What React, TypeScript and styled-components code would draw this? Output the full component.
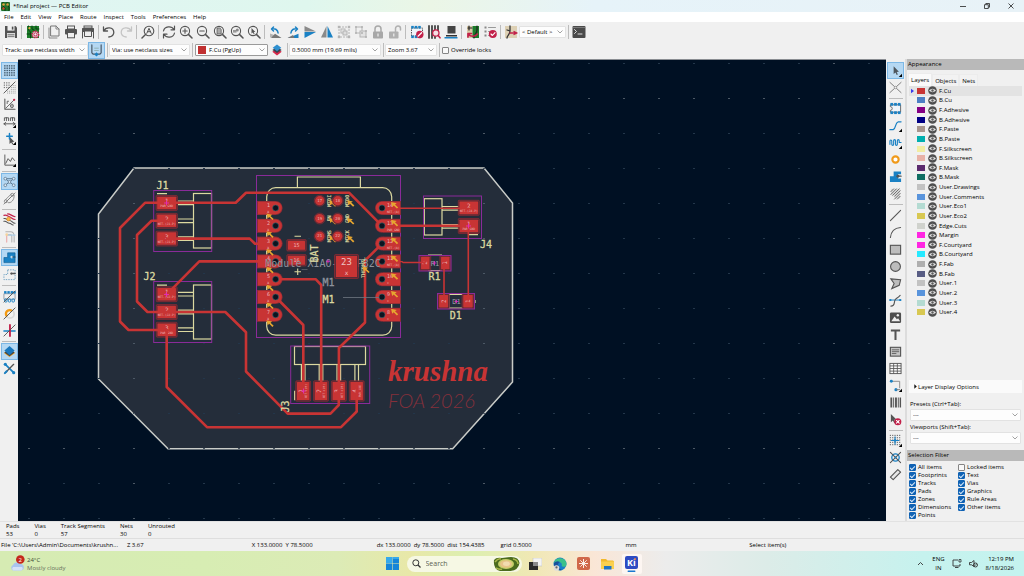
import React, { useState } from "react";
import styled, { createGlobalStyle, css } from "styled-components";

const GlobalStyle = createGlobalStyle`
  * { box-sizing: border-box; }
  html, body, #root { height: 100%; }
  body { margin: 0; font-family: "Open Sans", "Noto Sans", sans-serif; font-size: 6px; line-height: 8px; color: #000; font-variant-ligatures: none; overflow: hidden; }
  button, select, input { font: inherit; color: inherit; margin: 0; padding: 0; }
  svg { display: block; }
`;

/* ---------- icon set ---------- */

const G = "#545454";
const B = "#1a81c4";
const R = "#c2214a";
const L = "#b4b4b4";

const line = (d: string, stroke = G, w = 1.2, fill = "none") => (
  <path d={d} stroke={stroke} strokeWidth={w} fill={fill} strokeLinecap="round" strokeLinejoin="round" />
);
const lens = (inner: React.ReactNode) => (
  <>
    <circle cx="6" cy="6" r="4.6" fill="none" stroke={G} strokeWidth="1.1" />
    {line("M9.4 9.4 13 13", G, 1.5)}
    {inner}
  </>
);
const dots = (xs: number[], ys: number[], color = G, r = 0.65) =>
  xs.flatMap((x) => ys.map((y) => <rect key={`${x}-${y}`} x={x - r} y={y - r} width={r * 2} height={r * 2} fill={color} />));
const slash = line("M1 13 13 1", G, 1);
const corner = <path d="M14 10.5V14h-3.5z" fill="#000" />;

const icons: Record<string, React.ReactNode> = {
  save: <><path d="M1 1h10.5L13 2.5V13H1z" fill={G} /><rect x="3.5" y="1" width="7" height="4.6" fill="#f0f0f0" /><rect x="7.8" y="1.6" width="1.6" height="3" fill={G} /><rect x="3" y="8" width="8" height="5" fill="#dcdcdc" />{line("M4 9.7h6M4 11.4h6", G, 0.7)}</>,
  board: <><rect x="1" y="1" width="12" height="12" fill="#1d7d2a" />{line("M2.5 1v4l2 2v6M6 1v3l2 1M1 9h3M10 1v3h3", "#0c4213", 1)}<circle cx="3.4" cy="3.2" r="1.1" fill="#e0b040" /><circle cx="9.4" cy="9.4" r="3.2" fill="#f0f0f0" stroke={R} strokeWidth="1.5" strokeDasharray="1.6 .8" /><circle cx="9.4" cy="9.4" r="1.6" fill="none" stroke={R} /></>,
  page: <>{line("M4 1h5l3 3v7H4z", "#777", 1)}{line("M9 1v3h3M2 3v10h8", "#888", 1)}</>,
  print: <><rect x="3.5" y="1" width="7" height="3" fill="none" stroke={G} /><rect x="1" y="4" width="12" height="5.6" rx="1" fill={G} /><rect x="3.5" y="7.5" width="7" height="5.3" fill="#eee" stroke={G} /></>,
  plot: <><rect x="1" y="3" width="12" height="4" rx=".5" fill={G} /><rect x="3" y="1" width="8" height="2" fill="none" stroke={G} /><path d="M3.5 6h7v5.5h-7z" fill="#eee" stroke={G} />{line("M1.5 7v6M12.500 7v6", G, 1)}</>,
  undo: line("M1.500 2v4h4M1.800 6C4 1.500 11.500 2 11.800 7.300c0 2.500-2 4.400-5 4.700", G, 1.3),
  redo: line("M12.500 2v4h-4M12.200 6C10 1.500 2.500 2 2.200 7.300c0 2.500 2 4.400 5 4.700", "#c4c4c4", 1.3),
  find: <><circle cx="8" cy="6" r="4.8" fill="none" stroke={G} strokeWidth="1.1" />{line("M4.500 9.500 1 13", G, 1.5)}{line("M5.800 8.300 8 3.300l2.200 5M6.600 6.700h2.800", G, 1)}</>,
  refresh: <>{line("M1.500 6C2.500 1 9.500 .500 12 4.500M12.500 1v3.800H9M12.500 8c-1 5-8 5.500-10.500 1.500M1.500 13V9.200H5", G, 1.2)}</>,
  zin: lens(line("M6 3.800v4.400M3.800 6h4.400", G, 1.1)),
  zout: lens(line("M3.800 6h4.400", G, 1.1)),
  zfit: lens(<path d="M4 3h2.800L8.200 4.300V9H4z" fill="#aaa" stroke={G} strokeWidth=".7" />),
  zobj: lens(<><rect x="3" y="5" width="3.500" height="2.600" fill="#999" /><circle cx="7.300" cy="5" r="1.500" fill="#888" /></>),
  zsel: lens(<path d="M4.500 3v5.500l1.300-1 1 1.700.8-.5-.9-1.600 1.600-.2z" fill={G} />),
  rotl: <><path d="M1 12.500V8.500l11 4z" fill={L} /><path d="M2 13h10.500L6 8.800z" fill="#777" />{line("M4.500 2 2.500 4l2 2M2.800 4c3.500-.6 6 .6 6.300 4", B, 1.5)}</>,
  rotr: <><path d="M2 13h10.500V8.800z" fill={B} /><path d="M1.500 13h7L7 10z" fill="#777" />{line("M9.500 2l2 2-2 2M11.200 4C7.700 3.400 5.200 4.600 4.900 8", B, 1.5)}</>,
  mirv: <><path d="M1.500 1v5.500H13z" fill="#8a8a8a" /><path d="M1.500 13V7H13z" fill={B} /></>,
  mirh: <><path d="M6.500 1v11.500H1z" fill="#8a8a8a" /><path d="M7.500 1v11.500H13z" fill={B} /></>,
  group: <><rect x="2" y="2" width="10" height="10" fill="none" stroke={L} strokeDasharray="2 1" />{dots([2, 12], [2, 12], L, 1.2)}<rect x="4" y="4" width="4" height="4" fill="none" stroke={L} /><rect x="6" y="6" width="4" height="4" fill="#ddd" stroke={L} /></>,
  ungroup: <><rect x="2" y="2" width="6" height="6" fill="none" stroke={L} /><rect x="6" y="6" width="6" height="6" fill="#e2e2e2" stroke={L} />{dots([2, 8], [2, 8], L, 0.9)}{dots([12], [6, 12], L, 0.9)}</>,
  lock: <>{line("M4 7V4a3 3 0 0 1 6 0v3", "#a8a8a8", 1.500)}<rect x="2" y="6.500" width="10" height="7" rx=".8" fill="#a8a8a8" /><rect x="6.400" y="8.500" width="1.200" height="3" fill="#eee" /></>,
  unlock: <>{line("M7.500 7V3.500a2.500 2.500 0 0 1 5 0V5", "#b0b0b0", 1.500)}<rect x="1" y="6.500" width="9.500" height="7" rx=".8" fill="#b0b0b0" /><rect x="5.200" y="8.500" width="1.200" height="3" fill="#eee" /></>,
  fpedit: <><rect x="1.500" y="3" width="11" height="8" fill="#eef4fa" stroke={G} strokeDasharray="1.500 1" />{dots([2.5, 6, 9.500], [2.2, 11.8], B, 1.3)}<circle cx="9.800" cy="9.500" r="3.700" fill={R} />{line("M8 11.200 11.600 7.700", "#fff", 1.200)}</>,
  fplib: <>{line("M2 1v12M5 1v12M8 1v12M11 1v5", G, 2)}<circle cx="8.800" cy="8" r="3.200" fill="#f6dfe5" stroke={R} strokeWidth="1.300" />{line("M11.200 10.400 13 12.800", R, 1.600)}</>,
  inspector: <><rect x="3.500" y="1" width="8" height="7.500" fill="#444" /><path d="M2 10h11v1.500H2z" fill="#333" /><path d="M.5 12h13v1.500H.5z" fill={B} /></>,
  update: <><rect x="1" y="1" width="5.500" height="12" fill="#d9c9a7" /><rect x="6.500" y="1" width="6.500" height="12" fill="#1d7d2a" />{line("M8 13C8 9 11 9 11 5V1M2 3h4M3 1v4", "#222", 1.200)}{line("M2.500 9c2 3 6 3 9 0M2 12V8.500h3.500", R, 1.700)}</>,
  drc: <>{dots([2.500], [2.500, 6.500, 10.500], "#888", 1)}{line("M5.500 2.500h7M5.500 6.500h3M5.500 10.500h1", "#999", 1)}<circle cx="9.800" cy="9" r="4" fill={R} />{line("M8 9l1.400 1.500L12 7.700", "#fff", 1.100)}</>,
  net: <><rect x="1" y="1" width="12" height="12" fill="#ddd0b4" />{line("M6 1v5M3 13c0-3 3-3 3-7M6 6l-3-1", "#333", 1.300)}{line("M6 8h7M10 6.500 13 8l-3 1.500", R, 1.300)}</>,
  console: <><rect x=".5" y="1" width="13" height="12" rx="1" fill="#4a4a4a" />{line("M2.500 4.500 4.500 6.500 2.500 8.500M6 9h4", "#eee", 0.900)}<path d="M1 2.500h12" stroke="#999" strokeWidth=".6" /></>,
  trackw: <>{line("M2 1v8.500L3.500 11h7l1.500-1.500V1", "#4b5968", 1.300)}{line("M5 4.500h4M5 7h4", "#8aa", 0.900)}<path d="M7 9 9.300 11.200 7 13.500 4.700 11.200z" fill={B} /></>,
  layers: <><path d="M7 5.500 12.500 9 7 13.500 1.500 9z" fill="#d8284b" /><path d="M7 3.500 12.500 7 7 10.500 1.500 7z" fill="#3c4450" /><path d="M7 .5 12 4.500 7 8.500 2 4.500z" fill="#2e90d0" /></>,
  grid: dots([2, 4.500, 7, 9.500, 12], [2, 4.500, 7, 9.500, 12], "#3d5568", 0.750),
  gridov: <>{dots([1.500, 4, 6.500], [2, 4.500, 7], "#777")}{dots([5, 7, 9, 11, 13], [11, 13], "#999", 0.500)}{dots([9, 11, 13], [5, 7, 9], "#999", 0.500)}{slash}</>,
  polar: <>{line("M2 1v11h11", G, 1.100)}{line("M3 11 12 2", G, 0.900)}<circle cx="12" cy="2" r="1.200" fill={R} />{line("M4.500 6V3.500h1.500", G, 0.900)}<ellipse cx="9.600" cy="8.500" rx="1.500" ry="2" fill="none" stroke={G} strokeWidth=".9" />{line("M8 8.500h3", G, 0.700)}</>,
  mm: <>{line("M1.500 6V3h4.500v3M3.700 3v3M8 6V3h4.500v3M10.200 3v3", G, 1)}{line("M1 9.500h12M3 8 1 9.500 3 11M11 8l2 1.500L11 11", G, 1)}{corner}</>,
  cursor: <><path d="M7 5v8l1.800-1.800 1.300 2.300 1-.6-1.200-2.200 2.300-.2z" fill={G} />{line("M7 1.500v6M4 4.500h6", B, 1.600)}{corner}</>,
  graph: <>{line("M2 1v11h11M3 10l2.500-5L8 8l2-4 2.500 3", G, 1)}{corner}</>,
  rats: <>{line("M2.500 4 11.500 11M2.500 11 11.500 4M2.500 4h9", "#56728a", 1)}{[[2.5, 4], [11.5, 4], [2.5, 11], [11.5, 11], [7, 7.5]].map(([x, y]) => <circle key={`${x}${y}`} cx={x} cy={y} r="1.500" fill="#dfeefa" stroke="#56728a" strokeWidth=".8" />)}</>,
  ratsc: <>{line("M2.500 8.500 8.500 2.500M5.500 11.500c3 1 7-3 6.500-8M4 10l6-6", "#8a8a8a", 1)}<circle cx="3" cy="10" r="1.600" fill="none" stroke="#888" /><circle cx="10" cy="3" r="1.600" fill="none" stroke="#888" />{line("M1 13 13 1", "#777", 0.900)}</>,
  hicon: <>{line("M1 6c3-1 3 2 6 2s3 3 6 3M1 9c3-1 3 2 6 2 2 0 2 2 4 2", G, 1.100)}{line("M1 2.500c3-1 4 1 6 1.500S10 7 13 7M5 1c3 0 4 2 8 3", R, 1.300)}<circle cx="6" cy="6.500" r="2" fill="#f7b64a" stroke="#e08a1e" strokeWidth=".7" /></>,
  fade: <>{line("M3 2h5c3 0 4 2 4 5v6M5 5h3c1 0 1.500 1 1.500 2v6", "#b0b0b0", 1.100)}{line("M4 5v8", "#e9a9a9", 1.200)}{line("M4 5.500h9", "#a9cbe6", 1.200)}<circle cx="4" cy="5" r="1.500" fill="#f6d29c" /></>,
  zone: <><path d="M5 2h8v10.500H1V7h4z" fill={B} stroke="#0f5f96" strokeWidth=".7" /><circle cx="9.500" cy="6.500" r="1.500" fill="#cfe6f7" />{line("M10 6.500h3", "#24465e", 1.200)}</>,
  zoneo: <><path d="M5 2h8v10.500H1V7h4z" fill="none" stroke="#5f97bd" strokeDasharray="1.500 1.200" strokeWidth=".9" />{line("M9 6h4", G, 1.600)}<circle cx="9" cy="6" r="1.200" fill={G} /></>,
  padsk: <><path d="M1 4h12v6H1z" fill="none" stroke="#678" strokeWidth=".7" />{dots([2.500, 6, 9.500, 12.500], [2.500], B, 1.300)}{[3, 7, 11].map((x) => <rect key={x} x={x - 1.3} y="9.500" width="2.600" height="3.500" rx="1" fill="none" stroke={B} />)}{slash}</>,
  viask: <><circle cx="7.500" cy="7.500" r="4.500" fill="none" stroke="#d9d9d9" strokeWidth="2" /><path d="M3.500 11A5 5 0 0 1 10.500 3.500L9 5.500a2.500 2.500 0 0 0-3.700 3.600z" fill="#f39a12" />{slash}</>,
  tracksk: <>{line("M1 7.500h12", B, 1.600)}{line("M7.500 1v12", R, 2)}{slash}</>,
  contrast: <><path d="M7 4 13 8.500 7 13 1 8.500z" fill="#eaa024" /><path d="M7 4 12.500 8.200 7 12 1.500 8.200z" fill="#444" /><path d="M7 1 12.500 6 7 11 1.500 6z" fill="#1b78bd" /></>,
  tools: <>{line("M2.500 2.500 11.500 11.500", B, 1.800)}{line("M11.500 2.500 2.500 11.500", G, 1.400)}<circle cx="2.500" cy="2.500" r="1.700" fill={B} /><circle cx="11.500" cy="11.500" r="1.700" fill={B} />{line("M2 12l2-2", B, 2.200)}</>,
  select: <><path d="M5 2.500v8.300l2-1.700 1.300 2.700 1.200-.6-1.200-2.600 2.400-.2z" fill="#4e565d" />{corner}</>,
  ratcross: <>{line("M1 1.500 13 12.500M13 1.500 1 12.500", "#6a6a6a", 0.900)}<circle cx="7" cy="7" r="1.300" fill="#eee" stroke="#888" strokeWidth=".7" /></>,
  footprint: <><path d="M1.500 3h11v8h-11V9a2 2 0 0 0 0-4z" fill="#eef4fa" stroke={G} strokeWidth=".9" />{dots([3, 7, 11], [2.500, 11.500], B, 1.500)}</>,
  route: <>{line("M1 11.500h3.500C8 10 6 4.500 10 3h3", B, 1.300)}{corner}</>,
  tune: <>{line("M1 9V5.500c0-1.500 2-1.500 2 0V9c0 1.500 2 1.500 2 0V5c0-1.500 2-1.500 2 0v4c0 1.500 2 1.500 2 0V5c0-1.500 2-1.500 2 0v2h2", B, 1.200)}{corner}</>,
  via: <circle cx="7" cy="7" r="3.400" fill="#fff" stroke="#f09a1a" strokeWidth="2.300" />,
  zonedraw: <><path d="M5 1.500h8v3.200H9.800v4.500H13V13H1V6.800h4z" fill={B} /><circle cx="9.600" cy="6.700" r="1.600" fill={G} />{line("M10 6.700h3", G, 1.400)}</>,
  hatch: <><path d="M2 2h10v10.500H6V9H2z" fill="#ddd" />{line("M2 5l3-3M2 8l6-6M4 9l7-7M6 10l6-6M6 13l6-6M9 13l3-3", G, 0.900)}</>,
  segment: line("M1.500 12.500 12.500 1.500", G, 1.100),
  arc: line("M1.500 12.500C2 6 6 2 12.500 1.500", G, 1.100),
  rect: <rect x="1.500" y="2.500" width="11" height="9.500" fill="#bdbdbd" stroke={G} strokeWidth="1.200" />,
  circle: <circle cx="7" cy="7" r="5.300" fill="#bdbdbd" stroke={G} strokeWidth="1.200" />,
  poly: <path d="M2 2l10.500 1-1.500 6L3 12.500 5.500 7z" fill="#bdbdbd" stroke={G} strokeWidth="1.200" />,
  bezier: <>{line("M1 6.500h12", B, 1)}{line("M2 13c5 0 3-4 4.500-6.500S9 5 12 1.500", G, 1.200)}{dots([1.500, 12], [6.500], B, 1)}</>,
  image: <><rect x="1" y="1.500" width="12" height="11.500" rx="1.500" fill="#4e4e4e" /><path d="M2.500 11 6 6l2.500 3 1.300-1.300L12 11z" fill="#eee" /><circle cx="9.500" cy="4.500" r="1.300" fill="#eee" /></>,
  text: <path d="M2 1.500h10v2.200H8.100V12.800H5.900V3.700H2z" fill={G} />,
  textbox: <><rect x="1.500" y="2.500" width="11" height="9.500" fill="#c4c4c4" stroke={G} strokeWidth="1.200" />{line("M3.500 5.200h7M3.500 7.200h7M3.500 9.200h4", G, 0.900)}</>,
  table: <><rect x="1" y="1.500" width="12" height="11" fill="#fafafa" stroke={G} /><path d="M1 4.200h12M1 7h12M1 9.800h12M5 1.500v11M9 1.500v11" stroke={G} strokeWidth=".9" /></>,
  dimension: <>{line("M2.500 2.500h9v7", "#888", 1)}<circle cx="2.500" cy="2.500" r="1.600" fill={B} /><circle cx="7.500" cy="11.500" r="1.700" fill={B} />{line("M11.500 11.500H8", "#777", 1)}{corner}</>,
  barcode: <path d="M1.500 1.500h2v11h-2zM4.500 1.500h1v11h-1zM6.500 1.500h2v11h-2zM9.500 1.500h1v11h-1zM11.500 1.500h1.500v11h-1.500z" fill={G} />,
  del: <><path d="M2 1v9l2.200-2 1.500 3 1.300-.6-1.400-3H8.300z" fill={G} /><circle cx="9.500" cy="9.500" r="3.800" fill={R} />{line("M8 8l3 3M11 8l-3 3", "#fff", 1.100)}</>,
  origin: <>{dots([1.500, 4, 6.500, 9, 11.500], [1.500, 4, 6.500, 9, 11.500], "#666", 0.600)}{line("M2.500 7h8M6.500 3v8", B, 1.200)}<circle cx="6.500" cy="7" r="1.400" fill={B} />{corner}</>,
  drillorg: <><circle cx="7" cy="7" r="4" fill="none" stroke={B} strokeWidth="1.400" />{line("M1.500 1.500 12.500 12.500M12.500 1.500 1.500 12.500", G, 1.100)}<circle cx="7" cy="7" r="1.200" fill={B} /></>,
  measure: <path d="M1.500 9.800 9.500 1.800l3 2.700-8 8z" fill="#e6e6e6" stroke={G} strokeWidth="1.200" strokeLinejoin="round" />,
};

const Icon = ({ name, size = 14 }: { name: string; size?: number }) => (
  <svg width={size} height={size} viewBox="0 0 14 14" aria-hidden="true">{icons[name]}</svg>
);

const Chevron = () => (
  <svg width="6" height="4" viewBox="0 0 6 4" aria-hidden="true"><path d="M.5.500 3 3 5.500.5" fill="none" stroke="#8a8a8a" strokeWidth=".8" /></svg>
);

/* ---------- window frame ---------- */

const Window = styled.div`
  display: flex;
  flex-direction: column;
  min-height: 100vh;
  background: #f0f0f0;
`;

const TitleBar = styled.header`
  display: flex;
  align-items: center;
  height: 12px;
  padding: 0 1px;
  gap: 3px;
  background: linear-gradient(90deg, #e0f5f3, #dff7ee 30%, #ebf6e6 42%, #e6f3f9 58%, #e8f2f7);
`;

const WindowTitle = styled.h1`
  flex: 1;
  margin: 0;
  font-size: 6px;
  font-weight: 400;
`;

const WindowButtons = styled.div`
  display: flex;
`;

const WindowButton = styled.button`
  display: grid;
  place-items: center;
  width: 24px;
  height: 12px;
  border: 0;
  background: none;
`;

const MenuBar = styled.nav`
  display: flex;
  align-items: center;
  height: 10px;
  padding-left: 4px;
  gap: 7px;
  background: #fff;
`;

const MenuItem = styled.button`
  border: 0;
  background: none;
`;

const Toolbar = styled.div<{ $height: number }>`
  display: flex;
  align-items: center;
  height: ${(p) => p.$height}px;
  padding: 0 0 1px 2px;
`;

const ToolButton = styled.button<{ $active?: boolean }>`
  display: grid;
  place-items: center;
  flex: none;
  width: 17px;
  height: 17px;
  border: 1px solid transparent;
  background: none;
  ${(p) => p.$active && css`
    border-color: #7db8e6;
    background: #b5d8f3;
  `}
`;

const Divider = styled.span<{ $size?: number; $across?: boolean }>`
  display: grid;
  place-items: center;
  flex: none;
  ${(p) => p.$across
    ? css`height: ${p.$size ?? 4}px; width: 14px;`
    : css`width: ${p.$size ?? 4}px; height: 14px;`}
  &::before {
    content: "";
    background: #bcbcbc;
    ${(p) => p.$across ? css`width: 14px; height: 1px;` : css`width: 1px; height: 14px;`}
  }
`;

const SelectFrame = styled.span<{ $width?: number; $strong?: boolean }>`
  display: flex;
  align-items: center;
  flex: none;
  width: ${(p) => (p.$width ? `${p.$width}px` : "100%")};
  height: 12px;
  padding-left: 2px;
  gap: 3px;
  border: 1px solid ${(p) => (p.$strong ? "#9a9a9a" : "#e2e2e2")};
  border-radius: 1px;
  background: #fdfdfd;
`;

const SelectCell = styled.span`
  display: grid;
  flex: 1;
  align-items: center;
  & > * { grid-area: 1 / 1; }
  & > svg { justify-self: end; margin-right: 2px; pointer-events: none; }
`;

const NativeSelect = styled.select`
  appearance: none;
  width: 100%;
  height: 10px;
  border: 0;
  background: none;
`;

const Swatch = styled.span<{ $color: string; $tall?: boolean }>`
  flex: none;
  width: 8px;
  height: ${(p) => (p.$tall ? 8 : 6)}px;
  background: ${(p) => p.$color};
`;

type DropProps = { label: string; value: string; width?: number; color?: string };
const Drop = ({ label, value, width, color }: DropProps) => (
  <SelectFrame $width={width} $strong={!!color}>
    {color && <Swatch $color={color} $tall />}
    <SelectCell>
      <NativeSelect aria-label={label} defaultValue={value}><option>{value}</option></NativeSelect>
      <Chevron />
    </SelectCell>
  </SelectFrame>
);

const CheckLabel = styled.label`
  display: flex;
  align-items: center;
  gap: 2px;
  height: 8px;
  white-space: nowrap;
`;

const CheckBox = styled.input`
  appearance: none;
  display: grid;
  place-items: center;
  flex: none;
  width: 7px;
  height: 7px;
  border: 1px solid #858585;
  border-radius: 1px;
  background: #f8f8f8;
  &:checked { border-color: #0f62b4; background: #0f62b4; }
  &:checked::before {
    content: "";
    width: 4px;
    height: 2px;
    border: solid #d8e8f8;
    border-width: 0 0 1px 1px;
    transform: rotate(-45deg);
  }
`;

const Check = ({ text, on }: { text: string; on?: boolean }) => (
  <CheckLabel><CheckBox type="checkbox" defaultChecked={on} />{text}</CheckLabel>
);

const Workspace = styled.main`
  display: flex;
  flex: 1;
  min-height: 0;
`;

const SideTools = styled.div<{ $width: number }>`
  display: flex;
  flex-direction: column;
  align-items: center;
  flex: none;
  width: ${(p) => p.$width}px;
  padding-top: 3px;
  background: #f0f0f0;
`;

const Canvas = styled.section`
  display: flex;
  flex: 1;
  min-width: 0;
  border-top: 1px solid #8a8d92;
  background: #001023;
  & > svg { width: 100%; height: auto; }
`;

/* ---------- board drawing ---------- */

const COPPER = "#c83434";
const SILK = "#dcd9a0";
const COURT = "#8a2b99";

const Track = ({ d, w = 2.6 }: { d: string; w?: number }) => (
  <path d={d} fill="none" stroke={COPPER} strokeWidth={w} strokeLinecap="round" strokeLinejoin="round" />
);
const Court = ({ x, y, w, h }: { x: number; y: number; w: number; h: number }) => (
  <rect x={x} y={y} width={w} height={h} fill="none" stroke={COURT} strokeWidth="1" />
);
const Pad = ({ cx, cy, w, h, n, net, turned }: { cx: number; cy: number; w: number; h: number; n?: string; net?: string; turned?: boolean }) => (
  <g>
    <rect x={cx - w / 2 - 1.2} y={cy - h / 2 - 1.2} width={w + 2.4} height={h + 2.4} rx="1" fill="#5a2a35" stroke="#a02c34" strokeWidth=".6" />
    <rect x={cx - w / 2} y={cy - h / 2} width={w} height={h} rx=".6" fill={COPPER} />
    <g transform={turned ? `rotate(-90 ${cx} ${cy})` : undefined} textAnchor="middle" fill="#eeb4b4">
      {n && <text x={cx} y={cy + (net ? 0 : 2)} fontSize={n.length > 1 ? 5 : 6}>{n}</text>}
      {net && <text x={cx} y={cy + 4} fontSize="3">{net}</text>}
    </g>
  </g>
);
const Arrow = ({ x, y }: { x: number; y: number }) => (
  <path d={`M${x - 3.5} ${y - 3.5}l1.200 5 1.500-1.500 3.200 3.100 1.300-1.200-3.200-3 1.700-1.200z`} fill="#e6a630" />
);

const rowsY = [208, 225.8, 243.6, 261.4, 279.2, 297, 314.8];
const gridX = Array.from({ length: 25 }, (_, i) => 28.5 + i * 35.04);
const gridY = Array.from({ length: 14 }, (_, i) => 63.4 + i * 35.02);

const GridDots = () => (
  <g>
    {gridX.flatMap((x, i) => gridY.map((y, j) => {
      const major = i % 10 === 3 || j % 10 === 1;
      return <rect key={`${i}-${j}`} x={Math.round(x) - 1} y={Math.floor(y)} width="2" height="1" fill={major ? "#4c5865" : "#23364a"} />;
    }))}
  </g>
);

const Board = () => (
  <svg viewBox="18 60 868 461" role="img" aria-label="Board layout" fontFamily='"DejaVu Sans Mono", monospace'>
    <path d="M134 168H484L512.500 203V382L452.700 448.700H168L98.500 379V214z" fill="#242d3a" stroke="#c9ccc8" strokeWidth="1.500" />
    <GridDots />

    <g fill="none" stroke={SILK} strokeWidth="1.200">
      <rect x="193.500" y="193.500" width="18" height="54.500" />
      <rect x="193.500" y="285" width="18" height="54" />
      <rect x="294.500" y="346.500" width="71" height="18" />
      <rect x="424.300" y="198.700" width="17.700" height="36.300" />
      <rect x="266.700" y="187.700" width="125" height="147.500" rx="9" />
      <path d="M297.400 187.700V177H360.400V187.700" />
      {[202.800, 220.800, 238.600, 294.200, 312, 329.700].map((y) => <path key={y} d={`M178 ${y - 1.8}H193.500M178 ${y + 1.8}H193.500`} />)}
      {[208.300, 226.300].map((y) => <path key={y} d={`M442 ${y - 1.8}H459M442 ${y + 1.8}H459`} />)}
      {[303.200, 321, 338.800, 356.700].map((x) => <path key={x} d={`M${x - 1.8} 364.500V381M${x + 1.8} 364.500V381`} />)}
      <path d="M157 193.700H167M157 285.200H167M468.700 234.700H478M294.700 390.700V400.300" />
      <path d="M428 255H442M428 270.500H442M449 294.500H463M449 308H463M448.700 294V308.500M475 300V303" />
    </g>

    <Court x={153.7} y={190.5} w={58} h={61} />
    <Court x={153.7} y={281.5} w={58} h={61} />
    <Court x={256.5} y={175.5} w={144} h={162} />
    <Court x={290.7} y={346} w={79} h={57.500} />
    <Court x={423.5} y={196} w={58} h={42.500} />

    {[203, 220.8, 238.6].map((y, i) => <Pad key={y} cx={166.7} cy={y} w={19} h={12.5} n={`${i + 1}`} net={i ? "NET-(J1-P)" : "PWR_GND"} />)}
    {[294.2, 312, 329.7].map((y, i) => <Pad key={y} cx={166.7} cy={y} w={18.500} h={12.5} n={`${i + 1}`} net={i === 2 ? "PWR_GND" : "NET-(J2-P)"} />)}
    {[303.2, 321, 338.8, 356.7].map((x, i) => <Pad key={x} cx={x} cy={391} w={12.500} h={18} n={`${i + 1}`} net={i === 3 ? "PWR_GND" : "NET-(J3)"} turned />)}
    <Pad cx={468.8} cy={207.800} w={18.700} h={12.700} n="2" net="NET-(J4-P)" />
    <Pad cx={468.8} cy={226} w={18.700} h={12.700} n="1" net="PWR_GND" />
    <Pad cx={425.300} cy={263} w={8.500} h={12.500} n="2" turned />
    <Pad cx={445.300} cy={263} w={8.500} h={12.500} n="1" turned />
    <Pad cx={443.600} cy={301.200} w={9} h={12.500} n="2" turned />
    <Pad cx={468} cy={301.200} w={9.500} h={12.500} n="1" turned />
    <Court x={419} y={255.5} w={32} h={15.500} />
    <Court x={437.500} y={293.500} w={37} h={15.500} />

    {rowsY.map((y) => (
      <g key={y}>
        <rect x="257" y={y - 7} width="18" height="14" fill="#8c2c36" />
        <circle cx="275.600" cy={y} r="7" fill="#8c2c36" />
        <path d={`M258 ${y - 6.2}H275.600a6.200 6.200 0 0 1 0 12.400H258z`} fill={COPPER} />
        <rect x="383" y={y - 7} width="18" height="14" fill="#8c2c36" />
        <circle cx="382" cy={y} r="7" fill="#8c2c36" />
        <path d={`M400 ${y - 6.2}H382a6.200 6.200 0 0 0 0 12.400H400z`} fill={COPPER} />
      </g>
    ))}

    <Track d="M167 202.800H145L120 228V321.500L128.500 330H167" />
    <Track d="M167 220.800H151.500L137 235V301.500L147.500 312H225.300L246 332.300V371.500L287.700 413.600H330.500L338.800 405V390" />
    <Track d="M167 202.800H235.700L246 192.800H349.300L382 225.800H469" />
    <Track d="M167 238.600H249.700L255 243.700H275.600" />
    <Track d="M167 294.200 199.300 261.400H275.600" />
    <Track d="M166.700 330V387L207 427.200H341L356.700 411.500V390" />
    <Track d="M275.600 279.200H315.600L321.200 285V390" />
    <Track d="M275.600 297 303.300 325V390" />
    <Track d="M382 243.600 365 260.700V322.500L338.900 348V390" />
    <Track w={1.6} d="M382 208.200H469" />
    <Track w={1.4} d="M382 261.600H402L403 262.500H425" />
    <Track w={1.6} d="M468.300 226V300M444 263V300" />
    <path d="M343 297.500H382" stroke="#6f7680" strokeWidth=".8" />

    {rowsY.map((y, i) => (
      <g key={y} fill="#f0b8b8" fontSize="5">
        <text x="267" y={y - 1}>{i + 1}</text>
        <text x="387" y={y - 1}>{14 - i}</text>
        <text x="267" y={y + 5} fontSize="4">x</text>
        <text x="387" y={y + 5} fontSize="3">{i === 1 ? "PWR_GND" : i < 4 ? "NET-(A)" : "x"}</text>
        <circle cx="275.600" cy={y} r="3" fill="#0b1420" stroke="#3a6a72" strokeWidth=".6" />
        <circle cx="382" cy={y} r="3" fill="#0b1420" stroke="#3a6a72" strokeWidth=".6" />
        <Arrow x={270} y={y + 9} />
        <Arrow x={394.500} y={y - 2.5} />
      </g>
    ))}

    {[200.7, 218.5, 236.3].map((y, r) => (
      <g key={y}>
        {[319.700, 337.700].map((x, c) => (
          <g key={x}>
            <circle cx={x} cy={y} r="5.500" fill="#5a2a35" stroke="#8c2c36" strokeWidth=".6" />
            <circle cx={x} cy={y} r="4.600" fill={COPPER} />
            <text x={x} y={y + 1} fontSize="4" textAnchor="middle" fill="#eeb4b4">{17 + r * 2 + c}</text>
            <text transform={`translate(${x + 11} ${y}) rotate(-90)`} fontSize="5" textAnchor="middle" fill={SILK} stroke={SILK} strokeWidth=".2">{[["MTDI", "MTDO"], ["EN", "GND"], ["MTMS", "MTCK"]][r][c]}</text>
            <Arrow x={x + 13} y={y + 3} />
          </g>
        ))}
      </g>
    ))}

    <Pad cx={296.500} cy={245.300} w={17} h={9} n="15" />
    <Pad cx={296.500} cy={260.300} w={17} h={9} n="16" />
    <g fill="#8d929c" fontSize="10">
      <text x="265.300" y="267">Module_XIAO-</text>
      <text x="344.700" y="267">ESP32C</text>
      <text x="322.500" y="285.700" stroke="#8d929c" strokeWidth=".3">M1</text>
    </g>
    <rect x="334.500" y="254.500" width="24" height="24" rx="1" fill="#5a2a35" stroke="#a02c34" strokeWidth=".6" />
    <rect x="336" y="256" width="21" height="21" fill={COPPER} />
    <text x="346.500" y="265" fontSize="9" textAnchor="middle" fill="#eec4c4">23</text>
    <text x="346.500" y="275" fontSize="6" textAnchor="middle" fill="#eec4c4">x</text>

    <g fill={SILK} stroke={SILK} strokeWidth=".3" fontSize="10">
      <text x="156.500" y="189.300">J1</text>
      <text x="143.500" y="280">J2</text>
      <text x="480" y="247.500">J4</text>
      <text x="428.500" y="279.700">R1</text>
      <text x="449.700" y="318.500">D1</text>
      <text x="322.500" y="303.200">M1</text>
      <path d="M294.500 236.200H301M294.500 271.700H301M297.700 268.500V275" fill="none" strokeWidth="1.100" />
      <text transform="translate(317.800 262.500) rotate(-90)">BAT</text>
      <text transform="translate(289 412.500) rotate(-90)">J3</text>
      <text transform="translate(364.500 278) rotate(-90)" fontSize="5" strokeWidth=".1">THERMAL</text>
    </g>
    <Arrow x={366} y={270} />
    <g fill="#9aa0a8" fontSize="7">
      <text x="430.800" y="265.600">R1</text>
      <text x="452.300" y="303.700">D1</text>
    </g>
    <path d="M164 203h5M166.500 200.500v5M164 294.500h5M166.500 292v5M466 226h5M468.500 223.500v5M432.500 263h4M434.500 261v4M454.500 301.500h4M456.500 299.500v4M326 261.300h4M328 259.300v4M301 391h5M303.500 388.500v5" stroke="#e62fc9" strokeWidth=".8" />

    <text x="388" y="381" fontFamily='"Liberation Serif", serif' fontWeight="700" fontStyle="italic" fontSize="29" fill={COPPER}>krushna</text>
    <text x="388" y="408" fontFamily='Lato, sans-serif' fontWeight="300" fontStyle="italic" fontSize="20" fill="#85303a">FOA 2026</text>
  </svg>
);

/* ---------- appearance panel ---------- */

const Panel = styled.aside`
  display: flex;
  flex-direction: column;
  flex: none;
  width: 119px;
  border-left: 2px solid #dcdcdc;
  background: #f0f0f0;
`;

const PanelHeader = styled.h2`
  margin: 0;
  height: 11px;
  padding: 1px 1px;
  font-size: 6px;
  line-height: 9px;
  font-weight: 400;
  background: #b9b9b9;
`;

const TabRow = styled.div`
  display: flex;
  align-items: flex-start;
  height: 16px;
  padding: 3px 1px 0;
`;

const Tab = styled.button<{ $active?: boolean }>`
  height: ${(p) => (p.$active ? 13 : 12)}px;
  margin-top: ${(p) => (p.$active ? 0 : 1)}px;
  padding: 0 2px;
  border: 1px solid #ececec;
  border-bottom: 0;
  background: ${(p) => (p.$active ? "#fafafa" : "#f2f2f2")};
`;

const LayerList = styled.ul`
  display: grid;
  grid-auto-rows: 1fr;
  height: 231px;
  margin: 0 2px;
  padding: 0;
  list-style: none;
`;

const LayerRow = styled.li<{ $selected?: boolean }>`
  display: grid;
  grid-template-columns: 6px 8px 10px 1fr;
  align-items: center;
  column-gap: 2px;
  background: ${(p) => (p.$selected ? "#e3e3e3" : "none")};
`;

const EyeButton = styled.button`
  display: grid;
  place-items: center;
  width: 10px;
  height: 9px;
  border: 0;
  background: none;
`;

const OptionsToggle = styled.button`
  display: flex;
  align-items: center;
  gap: 1px;
  height: 13px;
  margin: 63px 2px 0;
  padding-left: 5px;
  border: 0;
  background: #fafafa;
`;

const Field = styled.label`
  display: flex;
  flex-direction: column;
  gap: 1px;
  height: 23px;
  padding: 0 3px;
`;

const Fields = styled.div`
  padding: 7px 0 4px;
`;

const Filters = styled.div`
  display: grid;
  grid-template-columns: 49px 1fr;
  grid-template-rows: repeat(7, 8px);
  grid-auto-flow: column;
  padding: 2px 2px 1px;
`;

const layers: [string, string][] = [
  ["F.Cu", "#c83434"], ["B.Cu", "#4d7fc4"], ["F.Adhesive", "#840084"], ["B.Adhesive", "#000084"],
  ["F.Paste", "#a8968e"], ["B.Paste", "#00aeae"], ["F.Silkscreen", "#f2eda1"], ["B.Silkscreen", "#e8b2a7"],
  ["F.Mask", "#5b2a6e"], ["B.Mask", "#0f6e62"], ["User.Drawings", "#c2c2c2"], ["User.Comments", "#5994dc"],
  ["User.Eco1", "#b4dbd2"], ["User.Eco2", "#d8c852"], ["Edge.Cuts", "#d0d2cd"], ["Margin", "#ff26e2"],
  ["F.Courtyard", "#ff26e2"], ["B.Courtyard", "#26e9ff"], ["F.Fab", "#afafaf"], ["B.Fab", "#585d84"],
  ["User.1", "#c2c2c2"], ["User.2", "#5994dc"], ["User.3", "#b4dbd2"], ["User.4", "#d8c852"],
];

const AppearancePanel = () => {
  const [active, setActive] = useState("F.Cu");
  return (
    <Panel>
      <PanelHeader>Appearance</PanelHeader>
      <TabRow>
        <Tab $active>Layers</Tab>
        <Tab>Objects</Tab>
        <Tab>Nets</Tab>
      </TabRow>
      <LayerList>
        {layers.map(([name, color]) => (
          <LayerRow key={name} $selected={name === active} onClick={() => setActive(name)}>
            <svg width="6" height="6" viewBox="0 0 6 6">{name === active && <path d="M2 .8 5 3 2 5.200z" fill="#3a3aee" />}</svg>
            <Swatch $color={color} />
            <EyeButton aria-label={`Toggle ${name}`}>
              <svg width="9" height="9" viewBox="0 0 9 9">
                <circle cx="4.500" cy="4.500" r="4.300" fill="#4f4f4f" />
                <path d="M1 4.500Q4.500 1.200 8 4.500 4.500 7.800 1 4.500z" fill="#e4e4e4" />
                <circle cx="4.500" cy="4.500" r="1.200" fill="#5c5c5c" />
              </svg>
            </EyeButton>
            <span>{name}</span>
          </LayerRow>
        ))}
      </LayerList>
      <OptionsToggle>
        <svg width="3" height="5" viewBox="0 0 3 5"><path d="M.3.200 2.800 2.500.3 4.800z" fill="#111" /></svg>
        Layer Display Options
      </OptionsToggle>
      <Fields>
        <Field>Presets (Ctrl+Tab):<Drop label="Presets" value="---" /></Field>
        <Field>Viewports (Shift+Tab):<Drop label="Viewports" value="---" /></Field>
      </Fields>
      <PanelHeader>Selection Filter</PanelHeader>
      <Filters>
        {["All items", "Footprints", "Tracks", "Pads", "Zones", "Dimensions", "Points"].map((t) => <Check key={t} text={t} on />)}
        <Check text="Locked items" />
        {["Text", "Vias", "Graphics", "Rule Areas", "Other items"].map((t) => <Check key={t} text={t} on />)}
      </Filters>
    </Panel>
  );
};

/* ---------- bottom bars ---------- */

const InfoBar = styled.dl`
  display: flex;
  height: 17px;
  margin: 0;
  padding: 0 6px;
  gap: 15px;
  border-top: 1px solid #e2e2e2;
`;

const Info = styled.div`
  & > dt, & > dd { margin: 0; }
`;

const StatusBar = styled.footer`
  display: grid;
  grid-template-columns: 126fr 125fr 125fr 124fr 125fr 124fr 275fr;
  align-items: center;
  height: 13px;
  border-top: 1px solid #dedede;
  padding: 0 0 1px 1px;
  white-space: pre;
`;

const Taskbar = styled.footer`
  display: grid;
  grid-template-columns: 1fr auto 1fr;
  align-items: center;
  height: 25px;
  padding: 0 10px;
  background: linear-gradient(90deg, #d6ebb3, #d7edb3 20%, #dcebb6 33%, #e8e8a8 40%, #dcefb0 46%, #f0e8b4 52%, #fae6d6 58%, #ececec 65%, #dcece8 75%, #c6f2ee 90%, #c4f3ef);
`;

const Weather = styled.div`
  display: flex;
  align-items: center;
  gap: 2px;
  color: #3d4a35;
`;

const Muted = styled.div`
  color: #66705c;
`;

const TaskGroup = styled.div`
  display: flex;
  align-items: center;
  gap: 4px;
`;

const TaskButton = styled.button<{ $active?: boolean }>`
  display: grid;
  place-items: center;
  width: 20px;
  height: 20px;
  border: 0;
  border-radius: 2px;
  background: ${(p) => (p.$active ? "#fdf6f2" : "none")};
`;

const SearchBox = styled.label`
  display: flex;
  align-items: center;
  width: 115px;
  height: 16px;
  padding: 0 2px 0 5px;
  gap: 5px;
  border-radius: 8px;
  background: #f6f8e4;
`;

const SearchInput = styled.input`
  flex: 1;
  min-width: 0;
  border: 0;
  background: none;
  font-size: 7px;
  &::placeholder { color: #5c5f52; opacity: 1; }
`;

const Tray = styled.div`
  display: flex;
  align-items: center;
  justify-content: flex-end;
  gap: 7px;
`;

const TrayText = styled.div<{ $end?: boolean }>`
  text-align: ${(p) => (p.$end ? "right" : "center")};
  padding-left: 1px;
  line-height: 9px;
`;

/* ---------- page ---------- */

type Item = string | number;
const mainTools: Item[] = [
  "save", 5, "board", 4, "page", "print", "plot", 4, "undo", "redo", 5, "find", 4,
  "refresh", "zin", "zout", "zfit", "zobj", "zsel", 5,
  "rotl", "rotr", "mirv", "mirh", "group", "ungroup", "lock", "unlock", 5,
  "fpedit", "fplib", "inspector", 5, "update", "drc", 4, "net",
];
const leftTools: Item[] = [
  "grid", "gridov", "polar", "mm", "cursor", 5, "graph", 4, "rats", "ratsc", 4, "hicon", "fade", 4,
  "zone", "zoneo", 5, "padsk", "viask", "tracksk", 4, "contrast", "tools",
];
const rightTools: Item[] = [
  "select", "ratcross", 4, "footprint", "route", "tune", "via", "zonedraw", "hatch", 5,
  "segment", "arc", "rect", "circle", "poly", "bezier", "image", "text", "textbox", "table", "dimension", "barcode", "del", 4,
  "origin", "drillorg", "measure",
];
const pressed = ["grid", "rats", "zone", "contrast", "select"];

const Tools = ({ items, across }: { items: Item[]; across?: boolean }) => (
  <>
    {items.map((it, i) => typeof it === "number"
      ? <Divider key={i} $size={it} $across={across} />
      : <ToolButton key={i} aria-label={it} $active={pressed.includes(it)}><Icon name={it} size={across ? 13 : 14} /></ToolButton>)}
  </>
);

const stats = [["Pads", "53"], ["Vias", "0"], ["Track Segments", "57"], ["Nets", "30"], ["Unrouted", "0"]];

export default function App() {
  return (
    <Window>
      <GlobalStyle />
      <TitleBar>
        <svg width="9" height="9" viewBox="0 0 9 9">
          <rect width="9" height="9" rx="1" fill="#23732c" />
          <path d="M2 0v4l2 2v3M6 0v3l2 2v4M0 6h2" stroke="#0b3d12" fill="none" />
          <circle cx="2.500" cy="2.500" r="1.300" fill="#e0a83c" /><circle cx="6.500" cy="2.500" r="1.200" fill="#d4a040" /><circle cx="2.500" cy="6.500" r="1.200" fill="#c74a2a" />
        </svg>
        <WindowTitle>*final project — PCB Editor</WindowTitle>
        <WindowButtons>
          <WindowButton aria-label="Minimize"><svg width="6" height="6"><path d="M0 3.500h6" stroke="#222" strokeWidth=".8" /></svg></WindowButton>
          <WindowButton aria-label="Restore"><svg width="6" height="6"><path d="M.5 1.700h3.800v3.800H.5zM1.800 1.500V.5h3.700v3.700h-1" fill="none" stroke="#222" strokeWidth=".8" /></svg></WindowButton>
          <WindowButton aria-label="Close"><svg width="6" height="6"><path d="M.5.500l5 5M5.500.500l-5 5" stroke="#222" strokeWidth=".8" /></svg></WindowButton>
        </WindowButtons>
      </TitleBar>
      <MenuBar>
        {["File", "Edit", "View", "Place", "Route", "Inspect", "Tools", "Preferences", "Help"].map((m) => <MenuItem key={m}>{m}</MenuItem>)}
      </MenuBar>
      <Toolbar $height={20}>
        <Tools items={mainTools} />
        <Drop label="Design variant" value="< Default >" width={47} />
        <Divider />
        <ToolButton aria-label="Scripting console"><Icon name="console" /></ToolButton>
      </Toolbar>
      <Toolbar $height={17}>
        <Drop label="Track width" value="Track: use netclass width" width={86} />
        <ToolButton $active aria-label="Use existing track width"><Icon name="trackw" size={13} /></ToolButton>
        <Divider />
        <Drop label="Via size" value="Via: use netclass sizes" width={81} />
        <Divider $size={5} />
        <Drop label="Active layer" value="F.Cu (PgUp)" width={73} color="#c03030" />
        <ToolButton aria-label="Layer pair"><Icon name="layers" size={12} /></ToolButton>
        <Divider />
        <Drop label="Grid" value="0.5000 mm (19.69 mils)" width={92} />
        <Divider />
        <Drop label="Zoom" value="Zoom 3.67" width={52} />
        <Divider $size={5} />
        <Check text="Override locks" />
      </Toolbar>
      <Workspace>
        <SideTools $width={18}><Tools items={leftTools} across /></SideTools>
        <Canvas><Board /></Canvas>
        <SideTools $width={19}><Tools items={rightTools} across /></SideTools>
        <AppearancePanel />
      </Workspace>
      <InfoBar>
        {stats.map(([k, v]) => <Info key={k}><dt>{k}</dt><dd>{v}</dd></Info>)}
      </InfoBar>
      <StatusBar>
        <span>File 'C:\Users\Admin\Documents\krushn...</span>
        <span>Z 3.67</span>
        <span>X 133.0000  Y 78.5000</span>
        <span>dx 133.0000  dy 78.5000  dist 154.4385</span>
        <span>grid 0.5000</span>
        <span>mm</span>
        <span>Select item(s)</span>
      </StatusBar>
      <Taskbar>
        <Weather>
          <svg width="15" height="18" viewBox="0 0 15 18">
            <path d="M3 15.500a3 3 0 0 1 0-5.500 4 4 0 0 1 7-1 3.200 3.200 0 0 1 1 6.500z" fill="#a9c4ee" />
            <path d="M3 15.500a2.500 2.500 0 0 1 0-3.500h9a2 2 0 0 1-1 3.500z" fill="#d5e2f7" />
            <circle cx="10.300" cy="4.500" r="4.300" fill="#c4281c" />
            <text x="10.300" y="6.700" fontSize="6" textAnchor="middle" fill="#fff">2</text>
          </svg>
          <div><div>24°C</div><Muted>Mostly cloudy</Muted></div>
        </Weather>
        <TaskGroup>
          <TaskButton aria-label="Start">
            <svg width="13" height="13" viewBox="0 0 13 13"><path d="M0 0h6.200v6.200H0zM6.800 0H13v6.200H6.800zM0 6.800h6.200V13H0zM6.800 6.800H13V13H6.800z" fill="#1685d8" /><path d="M0 0h6.200v6.200H0zM6.800 0H13v2H6.800z" fill="#36a9ec" /></svg>
          </TaskButton>
          <SearchBox>
            <svg width="9" height="9" viewBox="0 0 9 9"><circle cx="3.800" cy="3.800" r="3" fill="none" stroke="#333" /><path d="M6 6l2.500 2.500" stroke="#333" strokeWidth="1.200" /></svg>
            <SearchInput type="search" placeholder="Search" aria-label="Search" />
            <svg width="27" height="14" viewBox="0 0 27 14">
              <path d="M1 3Q3 0 9 1l9-1q8 0 8.500 6-1 7-9 8H7Q0 12 1 3z" fill="#4b6b1e" />
              <path d="M2 5q3-4 6-3M20 2q5 1 5 5M3 11q4 2 6 1" stroke="#a9b74a" strokeWidth="1.500" fill="none" />
              <ellipse cx="13" cy="7" rx="8" ry="5" fill="#c7cf6a" /><ellipse cx="13" cy="7" rx="6" ry="3.800" fill="#e8c48a" /><ellipse cx="13.500" cy="6.700" rx="3.500" ry="2.200" fill="#f2dcb0" />
            </svg>
          </SearchBox>
          <TaskButton aria-label="Task view"><svg width="13" height="12" viewBox="0 0 13 12"><rect x="4" y="0" width="9" height="8" fill="#f4f4f4" stroke="#bbb" strokeWidth=".5" /><rect x="0" y="4" width="9" height="8" fill="#2b2b2b" /><rect x="4" y="4" width="5" height="4" fill="#8b8b8b" /></svg></TaskButton>
          <TaskButton aria-label="Browser"><svg width="14" height="14" viewBox="0 0 14 14"><circle cx="7" cy="7" r="6.500" fill="#1a7fc9" /><path d="M.8 6A6.500 6.500 0 0 1 13.500 7c0 3-3.500 3.500-5 2 1-1.500 0-4-3-4C3 5 1.200 6 .8 6z" fill="#3cc18a" /><path d="M1 6a5 5 0 0 1 6-1c-3 1-2.500 6 2 8A6.500 6.500 0 0 1 1 6z" fill="#17509c" /><circle cx="3.500" cy="11" r="2.800" fill="#ddd" /><circle cx="3.500" cy="10.400" r="1.100" fill="#666" /></svg></TaskButton>
          <TaskButton aria-label="Assistant"><svg width="13" height="13" viewBox="0 0 13 13"><rect width="13" height="13" rx="2" fill="#d0684a" /><path d="M6.500 2v9M2 6.500h9M3.300 3.300l6.400 6.400M9.700 3.300 3.300 9.700" stroke="#fbeee6" strokeWidth="1" /></svg></TaskButton>
          <TaskButton aria-label="Files"><svg width="13" height="12" viewBox="0 0 13 12"><path d="M0 1h5l1.500 1.500H12l1 1V11H0z" fill="#f2b92d" /><path d="M0 3.500h13V11H0z" fill="#fbd04f" /><path d="M3 8h7.500v3.500H3z" fill="#2175c4" /></svg></TaskButton>
          <TaskButton $active aria-label="KiCad">
            <svg width="13" height="17" viewBox="0 0 13 17"><rect y="1" width="13" height="13" rx="2" fill="#2d4bc2" /><text x="6.300" y="11" fontSize="9" fontWeight="700" textAnchor="middle" fill="#fff">Ki</text><circle cx="10" cy="4" r="1" fill="#e87a4a" /><rect x="2.500" y="15.500" width="8" height="1.500" rx=".7" fill="#1878d0" /></svg>
          </TaskButton>
        </TaskGroup>
        <Tray>
          <svg width="7" height="5" viewBox="0 0 7 5"><path d="M1 4l2.500-2.500L6 4" fill="none" stroke="#333" strokeWidth=".9" /></svg>
          <TrayText>ENG<br />IN</TrayText>
          <svg width="10" height="9" viewBox="0 0 10 9"><path d="M6 1H1v6h7V5M3 8.500h3.500" fill="none" stroke="#333" strokeWidth=".9" /><path d="M7 .5h2v2.500H7z" fill="none" stroke="#333" strokeWidth=".8" /></svg>
          <svg width="9" height="9" viewBox="0 0 9 9"><path d="M.5 3.500h2L5 1.500v6L2.500 5.800h-2z" fill="none" stroke="#333" strokeWidth=".9" /><circle cx="6.500" cy="6" r="2" fill="none" stroke="#333" strokeWidth=".9" /><path d="M5 7.500 8 4.600" stroke="#333" strokeWidth=".7" /></svg>
          <TrayText $end>12:19 PM<br />8/18/2026</TrayText>
        </Tray>
      </Taskbar>
    </Window>
  );
}
